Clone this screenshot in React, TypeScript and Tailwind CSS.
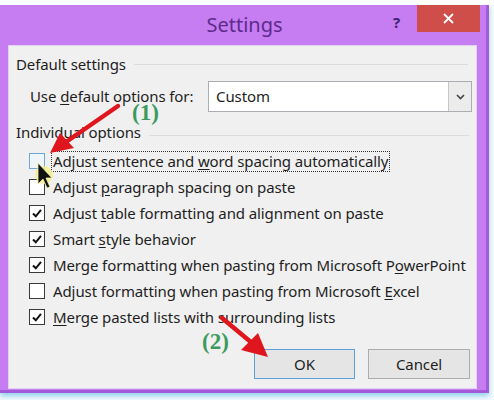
import React from 'react';

const font = { fontFamily: '"Noto Sans", "Open Sans", sans-serif' };

function Key({ children }: { children: React.ReactNode }) {
  return <span className="underline underline-offset-2">{children}</span>;
}

function Check({ checked, hover }: { checked: boolean; hover?: boolean }) {
  return (
    <div
      className={`w-[16px] h-[16px] border flex items-center justify-center shrink-0 ${
        hover ? 'border-[#6fa8d8] bg-[#eef6fc]' : 'border-[#3a3a3a] bg-white'
      }`}
    >
      {checked && (
        <svg width="12" height="12" viewBox="0 0 12 12">
          <path d="M2 6.5 L4.8 9.3 L10 2.8" fill="none" stroke="#111" strokeWidth="2" />
        </svg>
      )}
    </div>
  );
}

const rows: { checked: boolean; label: React.ReactNode; focus?: boolean; hover?: boolean }[] = [
  {
    checked: false,
    hover: true,
    focus: true,
    label: (
      <>
        Adjust sentence and <Key>w</Key>ord spacing automatically
      </>
    ),
  },
  { checked: false, label: <>Adjust <Key>p</Key>aragraph spacing on paste</> },
  { checked: true, label: <>Adjust <Key>t</Key>able formatting and alignment on paste</> },
  { checked: true, label: <>Smart <Key>s</Key>tyle behavior</> },
  { checked: true, label: <>Merge formatting when pasting from Microsoft P<Key>o</Key>werPoint</> },
  { checked: false, label: <>Adjust formatting when pasting from Microsoft <Key>E</Key>xcel</> },
  { checked: true, label: <><Key>M</Key>erge pasted lists with surrounding lists</> },
];

export default function App() {
  return (
    <div className="relative w-[494px] h-[400px] overflow-hidden bg-[#f4fafd] text-[#1e1e1e]" style={font}>
      <div className="h-[5px] bg-white" />
      {/* Window frame */}
      <div className="w-[489px] h-[388px] bg-[#c57df1] border-r-[3px] border-b-[3px] border-[#a45bd8] shadow-[0_3px_5px_#8fd3ef]">
        <div className="relative h-[40px] flex items-center justify-center">
          <span className="text-[20px] text-[#5e2a8c] mt-[-1px] ml-[3px]">Settings</span>
          <span className="absolute left-[393px] top-[6px] text-[15px] font-bold text-[#3d2370]">?</span>
          <div className="absolute left-[417px] top-0 w-[63px] h-[27px] bg-[#cf4e4a] flex items-center justify-center">
            <svg width="11" height="11" viewBox="0 0 11 11">
              <path d="M1 1 L10 10 M10 1 L1 10" stroke="#fff" strokeWidth="1.8" />
            </svg>
          </div>
        </div>
        {/* Content panel */}
        <div className="ml-[8px] w-[469px] h-[344px] bg-[#f0f0f0] border border-[#e2d2ef] flex flex-col text-[15px] tracking-[-0.1px]">
          <div className="flex items-center gap-2 pl-[7px] pr-[8px] mt-[8px] h-[20px]">
            <span>Default settings</span>
            <div className="flex-1 h-px bg-[#dcdcdc]" />
          </div>
          <div className="flex items-center mt-[7px] pl-[21px]">
            <span className="w-[178px]">
              Use <Key>d</Key>efault options for:
            </span>
            <div className="w-[264px] h-[31px] bg-white border border-[#abadb3] flex items-center">
              <span className="flex-1 pl-[7px]">Custom</span>
              <div className="w-[23px] h-full border-l border-[#c6c6c6] bg-[#ececec] flex items-center justify-center">
                <svg width="9" height="6" viewBox="0 0 9 6">
                  <path d="M1 1 L4.5 4.5 L8 1" fill="none" stroke="#444" strokeWidth="1.6" />
                </svg>
              </div>
            </div>
          </div>
          <div className="flex items-center gap-2 pl-[7px] pr-[7px] mt-[10px] h-[20px]">
            <span>Individual options</span>
            <div className="flex-1 h-px bg-[#dcdcdc] mt-[6px]" />
          </div>
          <div className="flex flex-col mt-[6px] pl-[20px]">
            {rows.map((r, i) => (
              <div key={i} className="h-[26px] flex items-center gap-[7px]">
                <Check checked={r.checked} hover={r.hover} />
                <span
                  className={`leading-[19px] px-[1px] ${
                    r.focus ? 'outline outline-1 outline-dotted outline-[#333]' : ''
                  }`}
                >
                  {r.label}
                </span>
              </div>
            ))}
          </div>
          <div className="flex justify-end gap-[13px] pr-[6px] mt-[19px]">
            <button className="w-[101px] h-[30px] bg-[#e5e5e5] border border-[#5d9fd6] text-[15px]">OK</button>
            <button className="w-[102px] h-[30px] bg-[#e5e5e5] border border-[#adadad] text-[15px]">Cancel</button>
          </div>
        </div>
      </div>

      {/* Annotations */}
      <span
        className="absolute left-[132px] top-[96px] text-[23px] font-bold text-[#3c9a5e]"
        style={{ fontFamily: '"Liberation Serif", serif' }}
      >
        (1)
      </span>
      <span
        className="absolute left-[202px] top-[325px] text-[23px] font-bold text-[#3c9a5e]"
        style={{ fontFamily: '"Liberation Serif", serif' }}
      >
        (2)
      </span>
      <svg className="absolute left-0 top-0 pointer-events-none" width="494" height="400" viewBox="0 0 494 400">
        {/* arrow 1 */}
        <path d="M118 106 L66 142" stroke="#e0161e" strokeWidth="4.5" strokeLinecap="round" />
        <path d="M50 153 L60 133 L74 148 Z" fill="#e0161e" />
        {/* cursor */}
        <circle cx="44" cy="175" r="9" fill="#f4f08a" opacity="0.8" />
        <path d="M38 163 L38 184 L43 179 L47 188 L50 187 L46 178 L52 178 Z" fill="#111" stroke="#f8f2a0" strokeWidth="0.8" />
        {/* arrow 2 */}
        <path d="M222 318 L252 343" stroke="#e0161e" strokeWidth="4.5" strokeLinecap="round" />
        <path d="M268 357 L241 350 L258 333 Z" fill="#e0161e" />
      </svg>
    </div>
  );
}
